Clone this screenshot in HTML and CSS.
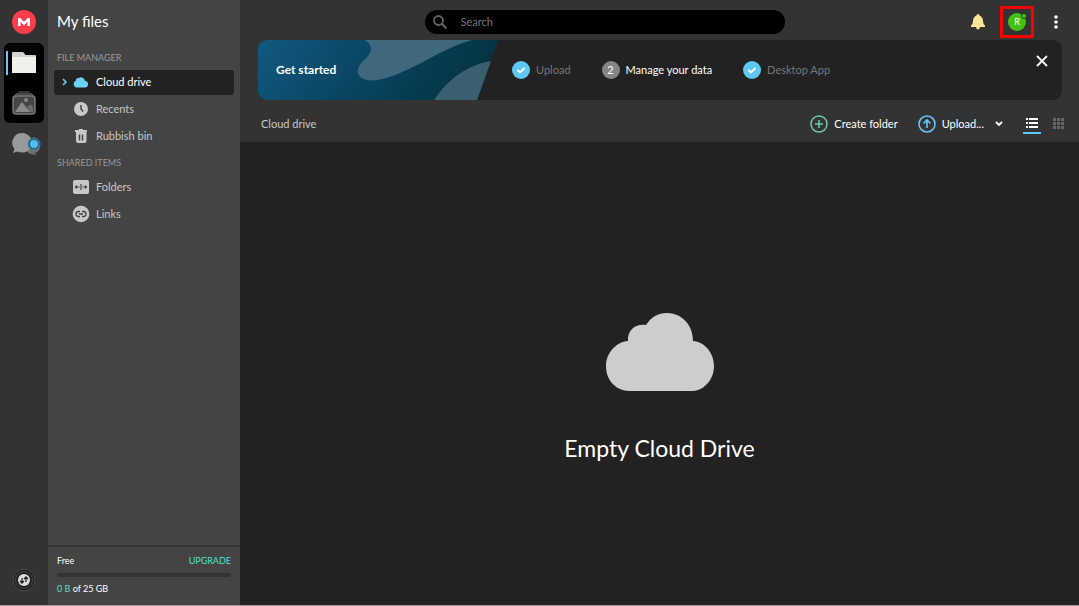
FILE: index.html
```html
<!DOCTYPE html>
<html lang="en">
<head>
    <meta charset="UTF-8">
    <meta name="viewport" content="width=device-width, initial-scale=1.0">
    <title>Cloud drive</title>
    <link rel="stylesheet" href="styles.css">
</head>
<body>
    <nav class="rail">
        <a href="#" class="logo" aria-label="Home">
            <svg width="24" height="24" viewBox="0 0 24 24">
                <circle cx="12" cy="12" r="12" fill="#ff3d4a"/>
                <path d="M6 16V8h2.200L12 11.800 15.800 8H18v8h-2.500v-4L12 15.200 8.500 12v4z" fill="#fff"/>
            </svg>
        </a>
        <div class="rail-group">
            <button class="rail-button current" aria-label="My files">
                <svg width="24" height="24" viewBox="0 0 24 24">
                    <path d="M0 2q0-1 1-1h9q1 0 2 1l1.500 2H23q1 0 1 1v16q0 1-1 1H1q-1 0-1-1z" fill="#d4d4ce"/>
                    <path d="M0 6h24v15q0 1-1 1H1q-1 0-1-1z" fill="#f0f0ec"/>
                </svg>
            </button>
            <button class="rail-button" aria-label="Gallery">
                <svg width="24" height="26" viewBox="0 0 24 26">
                    <path d="M7 1h10l3 3H4z" fill="#333"/>
                    <path d="M4 3h16l3 4H1z" fill="#4b4b4b"/>
                    <rect x="1" y="6" width="22" height="18" rx="3" fill="#464646" stroke="#777" stroke-width="1.500"/>
                    <path d="M3 22l6-9q1-1 2 0l7 9z" fill="#888"/>
                    <path d="M15 17l3-2q2-1 3 3v4h-3z" fill="#6c6c6c"/>
                    <circle cx="14" cy="10" r="2" fill="#888"/>
                </svg>
            </button>
        </div>
        <button class="rail-chat" aria-label="Chat">
            <svg width="30" height="24" viewBox="0 0 30 24">
                <path d="M14 17a7 6 0 1 1 9 4l1 2-5-1q-4-1-5-5z" fill="#707070"/>
                <path d="M10.500 1a10 9.800 0 1 1-5 18.500L1 21l1.500-4A10 9.800 0 0 1 10.500 1z" fill="#999"/>
                <circle cx="22" cy="12" r="6" fill="#2d5d7c" stroke="#3f83ad"/>
                <circle cx="22" cy="12" r="4" fill="#53bdf0"/>
            </svg>
        </button>
        <button class="rail-transfer" aria-label="Transfers">
            <svg width="24" height="24" viewBox="0 0 24 24">
                <circle cx="12" cy="12" r="11" fill="#222" stroke="#484848"/>
                <circle cx="12" cy="12" r="8.500" fill="#222" stroke="#444"/>
                <circle cx="12" cy="12" r="6" fill="#ddd"/>
                <path d="M10 10v5M8 13l2 2 2-2M14 14V9M12 11l2-2 2 2" fill="none" stroke="#222" stroke-width="1.300"/>
            </svg>
        </button>
    </nav>

    <aside class="sidebar">
        <h1 class="sidebar-title">My files</h1>
        <h2 class="sidebar-heading">FILE MANAGER</h2>
        <ul class="menu">
            <li>
                <a href="#" class="menu-item active">
                    <svg class="arrow" width="6" height="8" viewBox="0 0 6 8"><path d="M1 1l3 3-3 3" fill="none" stroke="#6bd1f7" stroke-width="1.600"/></svg>
                    <svg width="18" height="18" viewBox="0 0 18 18"><path d="M5 14.500a3.500 3.500 0 0 1-1-6.800 2 2 0 0 1 2.500-2.500A4 4 0 0 1 13 8a3.300 3.300 0 0 1 .500 6.500z" fill="#6bd1f7"/></svg>
                    Cloud drive
                </a>
            </li>
            <li>
                <a href="#" class="menu-item">
                    <svg width="18" height="18" viewBox="0 0 18 18"><circle cx="9" cy="9" r="7" fill="#c8c8c8"/><path d="M9 5v4l2 2.500" fill="none" stroke="#444" stroke-width="1.500"/></svg>
                    Recents
                </a>
            </li>
            <li>
                <a href="#" class="menu-item">
                    <svg width="18" height="18" viewBox="0 0 18 18"><path d="M3 3h4V2h4v1h4v2H3zM4 5h10.500v9q0 2-2 2H6q-2 0-2-2z" fill="#c8c8c8"/><path d="M7.500 7.500v6M10.500 7.500v6" stroke="#444" stroke-width="1.500"/></svg>
                    Rubbish bin
                </a>
            </li>
        </ul>
        <h2 class="sidebar-heading">SHARED ITEMS</h2>
        <ul class="menu">
            <li>
                <a href="#" class="menu-item">
                    <svg width="18" height="18" viewBox="0 0 18 18"><rect x="1" y="2" width="16" height="14" rx="2" fill="#c8c8c8"/><path d="M9 6v6M3.500 9H7.500M10.500 9h4M5 7.500L3.500 9 5 10.500M13 7.500L14.500 9 13 10.500" fill="none" stroke="#444" stroke-width="1.200"/></svg>
                    Folders
                </a>
            </li>
            <li>
                <a href="#" class="menu-item">
                    <svg width="18" height="18" viewBox="0 0 18 18"><circle cx="9" cy="9" r="8.300" fill="#c8c8c8"/><path d="M8 6.500H6.500a2.500 2.500 0 0 0 0 5H8M10 6.500h1.500a2.500 2.500 0 0 1 0 5H10M7 9h4" fill="none" stroke="#444" stroke-width="1.300"/></svg>
                    Links
                </a>
            </li>
        </ul>
        <div class="storage">
            <div class="storage-row">
                <span>Free</span>
                <a href="#" class="upgrade">UPGRADE</a>
            </div>
            <div class="storage-bar"></div>
            <div><span class="used">0 B</span> of 25 GB</div>
        </div>
    </aside>

    <main class="main">
        <header class="topbar">
            <label class="search">
                <svg width="14" height="14" viewBox="0 0 14 14"><circle cx="5.500" cy="5.500" r="4.500" fill="none" stroke="#666" stroke-width="1.800"/><path d="M9 9l4.500 4.500" stroke="#666" stroke-width="2"/></svg>
                <input type="text" placeholder="Search" aria-label="Search">
            </label>
            <div class="top-actions">
                <button aria-label="Notifications">
                    <svg width="14" height="16" viewBox="0 0 14 16"><path d="M7 0q1.500 0 1.500 1.500Q12 3 12 7q0 3 2 4.500V13H0v-1.500Q2 10 2 7q0-4 3.500-5.500Q5.500 0 7 0zM5 13h4Q8.500 15.500 7 15.500T5 13z" fill="#fce597"/></svg>
                </button>
                <button class="account" aria-label="Account">
                    <span class="avatar">R</span>
                    <span class="status"></span>
                </button>
                <button class="more" aria-label="More">
                    <svg width="4" height="14" viewBox="0 0 4 14" fill="#fff"><circle cx="2" cy="2" r="1.800"/><circle cx="2" cy="7" r="1.800"/><circle cx="2" cy="12" r="1.800"/></svg>
                </button>
            </div>
        </header>

        <div class="banner-strip">
            <section class="banner">
                <div class="banner-title">
                    <svg width="240" height="60" viewBox="0 0 240 60">
                        <defs>
                            <linearGradient id="blue" x1="0" y1="0" x2="1" y2="0.200">
                                <stop offset="0" stop-color="#115980"/>
                                <stop offset="0.600" stop-color="#08425c"/>
                                <stop offset="1" stop-color="#033443"/>
                            </linearGradient>
                        </defs>
                        <path d="M0 0h240l-21 60H0z" fill="url(#blue)"/>
                        <path d="M107 0h107C183 8 150 35 119 40c-14 2-21-4-19-11 2-8 14-13 13-21q-1-5-6-8z" fill="#3f687d"/>
                        <path d="M176 60c13-20 33-35 57-39l-14 39z" fill="#3a6070"/>
                    </svg>
                    <strong>Get started</strong>
                </div>
                <ol class="steps">
                    <li class="step done">
                        <svg width="18" height="18" viewBox="0 0 18 18"><circle cx="9" cy="9" r="9" fill="#5ec8f5"/><path d="M5.500 9l2.500 2.500L12.500 7" fill="none" stroke="#fff" stroke-width="1.800"/></svg>
                        Upload
                    </li>
                    <li class="step">
                        <span class="step-number">2</span>
                        Manage your data
                    </li>
                    <li class="step done">
                        <svg width="18" height="18" viewBox="0 0 18 18"><circle cx="9" cy="9" r="9" fill="#5ec8f5"/><path d="M5.500 9l2.500 2.500L12.500 7" fill="none" stroke="#fff" stroke-width="1.800"/></svg>
                        Desktop App
                    </li>
                </ol>
                <button class="close" aria-label="Close">
                    <svg width="12" height="12" viewBox="0 0 12 12"><path d="M1 1l10 10M11 1L1 11" stroke="#fff" stroke-width="1.800"/></svg>
                </button>
            </section>
        </div>

        <div class="toolbar">
            <span class="breadcrumb">Cloud drive</span>
            <button class="tool">
                <svg width="18" height="18" viewBox="0 0 18 18"><path d="M9 5v8M5 9h8M9 1a8 8 0 1 1 0 16A8 8 0 1 1 9 1z" fill="none" stroke="#71c9a9" stroke-width="1.500"/></svg>
                Create folder
            </button>
            <button class="tool">
                <svg width="18" height="18" viewBox="0 0 18 18"><path d="M9 13V5M5.500 8.500L9 5l3.500 3.500M9 1a8 8 0 1 1 0 16A8 8 0 1 1 9 1z" fill="none" stroke="#60c8f7" stroke-width="1.600"/></svg>
                Upload...
                <svg class="caret" width="8" height="6" viewBox="0 0 8 6"><path d="M1 1l3 3 3-3" fill="none" stroke="#fff" stroke-width="1.800"/></svg>
            </button>
            <button class="view selected" aria-label="List view">
                <svg width="12" height="10" viewBox="0 0 12 10" fill="#fff"><path d="M0 0h2v2H0zM3 0h9v2H3zM0 4h2v2H0zM3 4h9v2H3zM0 8h2v2H0zM3 8h9v2H3z"/></svg>
            </button>
            <button class="view" aria-label="Grid view">
                <svg width="11" height="11" viewBox="0 0 11 11" fill="#666"><path d="M0 0h3v3H0zM4 0h3v3H4zM8 0h3v3H8zM0 4h3v3H0zM4 4h3v3H4zM8 4h3v3H8zM0 8h3v3H0zM4 8h3v3H4zM8 8h3v3H8z"/></svg>
            </button>
        </div>

        <section class="empty">
            <svg width="110" height="80" viewBox="0 0 110 80">
                <path d="M24 79C9 78 1 67 1 54s10-24 22-25c-1-11 8-18 18-16C46 5 53 1 62 1c14 0 26 11 26 28 12 1 21 12 21 25s-9 24-21 25z" fill="#cdcdcd"/>
            </svg>
            <p>Empty Cloud Drive</p>
        </section>
    </main>
</body>
</html>
```
FILE: styles.css
```css
:root {
    --rail: #333333;
    --panel: #444444;
    --dark: #222222;
    --text: #ffffff;
    --text-secondary: #c8c8c8;
    --blue: #5fcbf7;
    --teal: #4fe0c8;
}

* {
    margin: 0;
    padding: 0;
    box-sizing: border-box;
}

body {
    display: flex;
    min-height: 100vh;
    background-color: var(--dark);
    border-bottom: 1px solid #a39c9f;
    color: var(--text);
    font-family: Lato, sans-serif;
    font-size: 11px;
    line-height: 16px;
}

button, input {
    border: none;
    background: none;
    color: inherit;
    font: inherit;
}

button {
    display: flex;
    align-items: center;
    cursor: pointer;
}

a {
    color: inherit;
    text-decoration: none;
}

ul, ol {
    list-style: none;
}

svg {
    display: block;
    flex-shrink: 0;
}

/* left rail */
.rail {
    display: flex;
    flex-direction: column;
    align-items: center;
    flex: 0 0 48px;
    padding: 10px 4px 13px;
    background-color: var(--rail);
}

.rail-group {
    width: 40px;
    margin: 9px 0;
    border-radius: 6px;
    background-color: #000000;
}

.rail-button {
    justify-content: center;
    width: 100%;
    height: 40px;
}

.rail-button.current {
    background: linear-gradient(var(--blue), var(--blue)) 2px 8px / 2px 24px no-repeat;
}

.rail-chat {
    align-self: flex-end;
    margin-right: 2px;
}

.rail-transfer {
    margin-top: auto;
}

/* sidebar */
.sidebar {
    display: flex;
    flex-direction: column;
    flex: 0 0 192px;
    background-color: var(--panel);
}

.sidebar-title {
    padding: 0 9px 2px;
    font-size: 15px;
    font-weight: normal;
    line-height: 42px;
}

.sidebar-heading {
    padding: 2px 9px 0;
    color: #9a9a9a;
    font-size: 9px;
    font-weight: normal;
    line-height: 24px;
}

.menu {
    display: flex;
    flex-direction: column;
    gap: 2px;
    padding: 0 6px;
}

.menu-item {
    display: flex;
    align-items: center;
    gap: 6px;
    height: 25px;
    padding: 0 0 2px 18px;
    border-radius: 3px;
    color: var(--text-secondary);
}

.menu-item.active {
    padding-left: 8px;
    background-color: var(--dark);
    color: var(--text);
}

.arrow {
    margin-right: -2px;
}

.storage {
    display: flex;
    flex-direction: column;
    gap: 4px;
    margin-top: auto;
    padding: 6px 9px 8px;
    border-top: 2px solid #363636;
    font-size: 9px;
}

.storage-row {
    display: flex;
    justify-content: space-between;
}

.storage-bar {
    height: 4px;
    border-radius: 2px;
    background-color: #333333;
}

.upgrade, .used {
    color: var(--teal);
}

/* main area */
.main {
    display: flex;
    flex-direction: column;
    flex: 1;
    min-width: 0;
}

.topbar {
    display: flex;
    align-items: center;
    padding: 6px 0 2px;
    background-color: var(--rail);
}

.search {
    display: flex;
    align-items: center;
    gap: 14px;
    width: 43%;
    height: 24px;
    margin-left: 22%;
    padding: 0 8px;
    border-radius: 12px;
    background-color: #000000;
}

.search input {
    flex: 1;
    outline: none;
}

.search input::placeholder {
    color: #777777;
}

.top-actions {
    display: flex;
    align-items: center;
    gap: 15px;
    margin-left: auto;
    padding-right: 21px;
}

.more {
    margin-left: 5px;
}

.account {
    position: relative;
    justify-content: center;
    width: 34px;
    height: 32px;
    border: 3px solid #ff0000;
}

.avatar {
    width: 18px;
    height: 18px;
    border-radius: 50%;
    background-color: #45c112;
    font-size: 9px;
    line-height: 18px;
}

.status {
    position: absolute;
    top: 4px;
    right: 4px;
    width: 6px;
    height: 6px;
    border: 1px solid var(--rail);
    border-radius: 50%;
    background-color: #45c112;
}

.banner-strip {
    padding: 0 17px 0 18px;
    background-color: var(--rail);
}

.banner {
    display: flex;
    align-items: center;
    overflow: hidden;
    border-radius: 9px;
    background-color: var(--dark);
}

.banner-title {
    display: grid;
    align-items: center;
}

.banner-title > * {
    grid-area: 1 / 1;
}

.banner-title strong {
    padding-left: 18px;
    font-size: 12px;
}

.steps {
    display: flex;
    gap: 31px;
    padding-left: 14px;
}

.step {
    display: flex;
    align-items: center;
    gap: 6px;
}

.step.done {
    color: #777777;
}

.step-number {
    width: 18px;
    border-radius: 50%;
    background-color: #858585;
    line-height: 18px;
    text-align: center;
}

.close {
    margin-left: auto;
    padding: 0 14px 18px;
}

.toolbar {
    display: flex;
    align-items: center;
    padding: 14px 12px 8px 21px;
    background-color: var(--rail);
}

.breadcrumb {
    margin-right: auto;
    color: var(--text-secondary);
}

.tool {
    gap: 6px;
    margin-right: 20px;
}

.caret {
    margin-left: 5px;
}

.view {
    justify-content: center;
    width: 18px;
    height: 20px;
    border-bottom: 2px solid transparent;
}

.view.selected {
    margin-right: 8px;
    border-color: var(--blue);
}

.empty {
    display: flex;
    flex-direction: column;
    align-items: center;
    justify-content: center;
    flex: 1;
    gap: 40px;
    padding-top: 28px;
    font-size: 23px;
    line-height: 32px;
}
```
